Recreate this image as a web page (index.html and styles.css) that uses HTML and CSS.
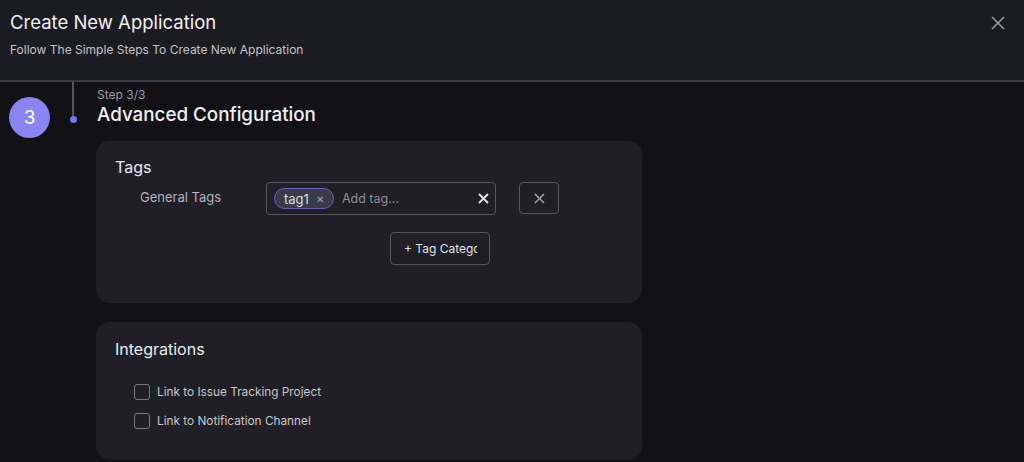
FILE: index.html
```html
<!DOCTYPE html>
<html>

<head>
    <link rel="stylesheet" href="styles.css">
</head>

<body>
    <div class="header">
        <div>
            <h1 class="title">Create New Application</h1>
            <p class="subtitle">Follow The Simple Steps To Create New Application</p>
        </div>
        <button class="close-btn" aria-label="close">
            <svg width="16" height="16" viewBox="0 0 16 16"><path d="M2 2L14 14M14 2L2 14" stroke="#9a9aa2" stroke-width="1.6" /></svg>
        </button>
    </div>

    <div class="content">
        <div class="step-col">
            <div class="step-num">3</div>
        </div>
        <div class="line-col">
            <div class="line"></div>
            <div class="dot"></div>
        </div>
        <div class="main">
            <div class="step-head">
                <div class="step-label">Step 3/3</div>
                <h2 class="step-title">Advanced Configuration</h2>
            </div>

            <div class="card tags-card">
                <h3 class="card-title">Tags</h3>
                <div class="tag-row">
                    <label class="tag-label">General Tags</label>
                    <div class="tag-input">
                        <span class="chip">tag1 <span class="chip-x">&#x2715;</span></span>
                        <span class="placeholder">Add tag...</span>
                        <svg class="clear" width="11" height="11" viewBox="0 0 11 11"><path d="M1 1L10 10M10 1L1 10" stroke="#e6e6ea" stroke-width="1.8" /></svg>
                    </div>
                    <button class="remove-btn">
                        <svg width="11" height="11" viewBox="0 0 11 11"><path d="M1 1L10 10M10 1L1 10" stroke="#a0a0a8" stroke-width="1.5" /></svg>
                    </button>
                </div>
                <div class="cat-row">
                    <button class="cat-btn"><span>+ Tag Category</span></button>
                </div>
            </div>

            <div class="card int-card">
                <h3 class="card-title">Integrations</h3>
                <div class="checks">
                    <label class="check"><span class="box"></span>Link to Issue Tracking Project</label>
                    <label class="check"><span class="box"></span>Link to Notification Channel</label>
                </div>
            </div>
        </div>
    </div>
</body>

</html>
```

FILE: styles.css
```css
* {
    box-sizing: border-box;
}

html,
body {
    margin: 0;
    padding: 0;
    height: 100%;
}

body {
    background-color: #111116;
    font-family: Inter, "Noto Sans", sans-serif;
    color: #e8e8ec;
    overflow: hidden;
}

.header {
    height: 82px;
    background-color: #1b1b22;
    border-bottom: 2px solid #3a3a42;
    display: flex;
    justify-content: space-between;
    padding: 10px 18px 0 10px;
}

.title {
    margin: 0;
    font-size: 18.5px;
    font-weight: 400;
    color: #f2f2f4;
    line-height: 24px;
}

.subtitle {
    margin: 9px 0 0;
    font-size: 12px;
    color: #c4c4ca;
    line-height: 14px;
}

.close-btn {
    background: none;
    border: none;
    padding: 0;
    margin-top: 5px;
    height: 16px;
    cursor: pointer;
}

.content {
    display: flex;
}

.step-col {
    width: 72px;
    padding: 15px 0 0 9px;
}

.step-num {
    width: 41px;
    height: 41px;
    border-radius: 50%;
    background-color: #8a84f2;
    color: #fff;
    font-size: 19px;
    display: flex;
    align-items: center;
    justify-content: center;
}

.line-col {
    width: 24px;
    display: flex;
    flex-direction: column;
    align-items: flex-start;
}

.line {
    width: 2px;
    height: 34px;
    background-color: #55555e;
}

.dot {
    width: 7px;
    height: 7px;
    border-radius: 50%;
    background-color: #7a76f0;
    margin-left: -2.5px;
}

.main {
    width: 546px;
}

.step-head {
    padding: 6px 0 0 1px;
}

.step-label {
    font-size: 12px;
    color: #9a9aa2;
    line-height: 14px;
}

.step-title {
    margin: 1px 0 0;
    font-size: 18.8px;
    font-weight: 500;
    color: #f2f2f4;
    line-height: 24px;
}

.card {
    background-color: #1f1f25;
    border-radius: 14px;
    padding: 16px 19px;
}

.tags-card {
    margin-top: 14px;
    height: 162px;
}

.int-card {
    margin-top: 19px;
    height: 138px;
    padding-top: 17px;
}

.card-title {
    margin: 0;
    font-size: 16px;
    font-weight: 400;
    color: #ececf0;
    line-height: 20px;
}

.tag-row {
    display: flex;
    align-items: flex-start;
    margin-top: 5px;
}

.tag-label {
    width: 151px;
    padding: 7px 0 0 25px;
    font-size: 13px;
    color: #b4b4bc;
}

.tag-input {
    width: 230px;
    height: 33px;
    border: 1px solid #55555e;
    border-radius: 4px;
    display: flex;
    align-items: center;
    padding: 0 6px 0 7px;
}

.chip {
    height: 21px;
    border: 1.5px solid #6863c4;
    background-color: #3a3a48;
    border-radius: 11px;
    font-size: 13px;
    color: #dcdce2;
    padding: 0 9px 0 9px;
    display: flex;
    align-items: center;
    gap: 7px;
}

.chip-x {
    font-size: 10px;
    color: #a8a8b0;
}

.placeholder {
    margin-left: 8px;
    font-size: 12.5px;
    color: #8e8e96;
    flex: 1;
}

.remove-btn {
    margin-left: 23px;
    width: 40px;
    height: 32px;
    background: none;
    border: 1px solid #55555e;
    border-radius: 4px;
    display: flex;
    align-items: center;
    justify-content: center;
    padding: 0;
}

.cat-row {
    padding-left: 275px;
    margin-top: 17px;
}

.cat-btn {
    width: 100px;
    height: 33px;
    background: none;
    border: 1px solid #55555e;
    border-radius: 4px;
    color: #e2e2e6;
    font-family: Inter, "Noto Sans", sans-serif;
    font-size: 12px;
    padding: 0 0 0 13px;
    text-align: left;
    white-space: nowrap;
}

.cat-btn span {
    display: block;
    width: 73px;
    overflow: hidden;
}

.checks {
    margin-top: 25px;
    padding-left: 19px;
    display: flex;
    flex-direction: column;
    gap: 13px;
}

.check {
    display: flex;
    align-items: center;
    font-size: 11.8px;
    color: #c8c8ce;
    line-height: 16px;
}

.box {
    width: 16px;
    height: 16px;
    border: 1.5px solid #7a7a82;
    border-radius: 3px;
    margin-right: 7px;
}
```
